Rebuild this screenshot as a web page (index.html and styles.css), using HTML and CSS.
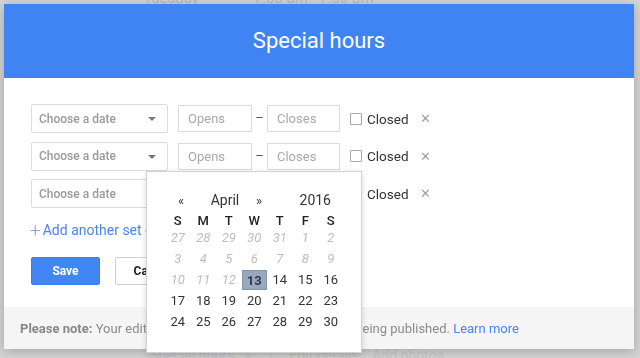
FILE: index.html
```html
<!DOCTYPE html>
<html lang="en">
<head>
  <meta charset="UTF-8" />
  <meta name="viewport" content="width=device-width, initial-scale=1.0" />
  <title>Special hours</title>
  <link rel="stylesheet" href="styles.css">
</head>
<body>

  <!-- page behind the dialog, mostly hidden -->
  <div class="page">
    <div class="page-row"><span class="day">Tuesday</span><span>7:00 am - 7:00 pm</span></div>
    <div class="page-bottom">Special hours &nbsp; v &nbsp;&nbsp;&nbsp; | &nbsp;&nbsp;&nbsp; Edit details &nbsp;&nbsp; Add photos</div>
  </div>

  <div class="overlay">
    <div class="dialog">
      <div class="dialog-head">Special hours</div>

      <div class="dialog-body">
        <div class="hours-row">
          <div class="date-select">Choose a date <span class="caret"></span></div>
          <input class="time" type="text" placeholder="Opens" />
          <span class="dash">–</span>
          <input class="time" type="text" placeholder="Closes" />
          <label class="closed"><span class="box"></span>Closed</label>
          <span class="remove">✕</span>
        </div>
        <div class="hours-row">
          <div class="date-select">Choose a date <span class="caret"></span></div>
          <input class="time" type="text" placeholder="Opens" />
          <span class="dash">–</span>
          <input class="time" type="text" placeholder="Closes" />
          <label class="closed"><span class="box"></span>Closed</label>
          <span class="remove">✕</span>
        </div>
        <div class="hours-row">
          <div class="date-select">Choose a date <span class="caret"></span></div>
          <input class="time" type="text" placeholder="Opens" />
          <span class="dash">–</span>
          <input class="time" type="text" placeholder="Closes" />
          <label class="closed"><span class="box"></span>Closed</label>
          <span class="remove">✕</span>
        </div>

        <a class="add-link" href="#"><span class="plus">+</span>Add another set of hours</a>

        <div class="actions">
          <button class="btn-save">Save</button>
          <button class="btn-cancel">Cancel</button>
        </div>
      </div>

      <div class="dialog-foot">
        <b>Please note:</b> Your edits may be checked for quality before being published. <a href="#">Learn more</a>
      </div>

      <!-- date picker opened from the second row -->
      <div class="calendar">
        <div class="cal-head">
          <span class="nav prev">«</span>
          <span class="month">April</span>
          <span class="nav next">»</span>
          <span class="year">2016</span>
        </div>
        <div class="cal-grid">
          <span class="wd">S</span><span class="wd">M</span><span class="wd">T</span><span class="wd">W</span><span class="wd">T</span><span class="wd">F</span><span class="wd">S</span>
          <span class="off">27</span><span class="off">28</span><span class="off">29</span><span class="off">30</span><span class="off">31</span><span class="off">1</span><span class="off">2</span>
          <span class="off">3</span><span class="off">4</span><span class="off">5</span><span class="off">6</span><span class="off">7</span><span class="off">8</span><span class="off">9</span>
          <span class="off">10</span><span class="off">11</span><span class="off">12</span><span class="today">13</span><span>14</span><span>15</span><span>16</span>
          <span>17</span><span>18</span><span>19</span><span>20</span><span>21</span><span>22</span><span>23</span>
          <span>24</span><span>25</span><span>26</span><span>27</span><span>28</span><span>29</span><span>30</span>
        </div>
      </div>
    </div>
  </div>

</body>
</html>
```

FILE: styles.css
```css
* {
  box-sizing: border-box;
}

body {
  margin: 0;
  font-family: Roboto, 'Noto Sans', sans-serif;
  background: #d6d6d6;
  height: 358px;
  overflow: hidden;
  color: #333;
}

.page {
  color: #bdbdbd;
  font-size: 15px;
}

.page-row {
  display: flex;
  gap: 55px;
  margin-top: -11px;
  padding-left: 143px;
}

.page-bottom {
  margin-top: 340px;
  padding-left: 150px;
  font-size: 14px;
  color: #c9c9c9;
}

.overlay {
  position: fixed;
  inset: 0;
}

.dialog {
  position: relative;
  width: 630px;
  margin: 4px 0 0 4px;
  background: #fff;
  box-shadow: 0 2px 12px rgba(0, 0, 0, 0.25);
}

.dialog-head {
  height: 74px;
  background: #4084f4;
  color: #fff;
  font-size: 22px;
  display: flex;
  align-items: center;
  justify-content: center;
  padding-bottom: 2px;
}

.dialog-body {
  padding: 26px 27px 22px;
}

.hours-row {
  display: flex;
  align-items: center;
  height: 29px;
  margin-bottom: 8.5px;
}

.date-select {
  width: 137px;
  height: 29px;
  border: 1px solid #dcdcdc;
  border-radius: 2px;
  padding-left: 7px;
  display: flex;
  align-items: center;
  font-size: 12px;
  font-weight: 500;
  color: #9a9a9a;
  position: relative;
}

.caret {
  position: absolute;
  right: 11px;
  top: 12px;
  border-left: 4px solid transparent;
  border-right: 4px solid transparent;
  border-top: 4px solid #777;
}

.time {
  height: 27px;
  border: 1px solid #dcdcdc;
  border-radius: 0;
  padding: 0 9px;
  font-family: inherit;
  font-size: 13px;
  outline: none;
}

.time::placeholder {
  color: #a8a8a8;
}

.hours-row .time:first-of-type {
  width: 74px;
  margin-left: 10px;
}

.hours-row .time:last-of-type {
  width: 73px;
}

.dash {
  width: 15px;
  text-align: center;
  font-size: 13px;
  color: #555;
  margin-top: -2px;
}

.closed {
  display: flex;
  align-items: center;
  margin-left: 10px;
  font-size: 13.5px;
  color: #333;
}

.box {
  width: 12px;
  height: 12px;
  border: 1px solid #a8a8a8;
  border-radius: 1px;
  margin-right: 5px;
}

.remove {
  margin-left: 11px;
  font-size: 13px;
  color: #a0a0a0;
}

.add-link {
  display: flex;
  align-items: center;
  margin-top: 14px;
  height: 16px;
  font-size: 14px;
  color: #4a84ee;
  text-decoration: none;
}

.plus {
  font-size: 19px;
  font-weight: 300;
  color: #8fa6d0;
  margin-right: 2px;
  margin-left: -1px;
}

.actions {
  display: flex;
  gap: 15px;
  margin-top: 19px;
}

.actions button {
  height: 28px;
  border-radius: 2px;
  font-family: inherit;
  font-size: 12px;
  font-weight: bold;
  cursor: pointer;
}

.btn-save {
  width: 69px;
  background: #4285f4;
  color: #fff;
  border: 1px solid #3b7deb;
}

.btn-cancel {
  width: 74px;
  background: #fff;
  color: #222;
  border: 1px solid #cfcfcf;
}

.dialog-foot {
  height: 42px;
  background: #f5f5f5;
  padding: 0 16px;
  display: flex;
  align-items: center;
  white-space: pre;
  font-size: 13px;
  color: #8a8a8a;
}

.dialog-foot b {
  color: #888;
}

.dialog-foot a {
  color: #4a84ee;
  text-decoration: none;
}

.calendar {
  position: absolute;
  top: 167px;
  left: 142px;
  width: 216px;
  height: 182px;
  background: #fff;
  border: 1px solid #d2d2d2;
  box-shadow: 0 2px 6px rgba(0, 0, 0, 0.15);
  padding: 18px 18px 0 18px;
}

.cal-head {
  display: flex;
  align-items: center;
  height: 20px;
  font-size: 14px;
  color: #333;
}

.nav {
  font-size: 13px;
}

.prev {
  width: 32px;
  text-align: center;
}

.month {
  width: 56px;
  text-align: center;
}

.next {
  width: 12px;
  text-align: center;
}

.year {
  flex: 1;
  text-align: right;
  padding-right: 12px;
}

.cal-grid {
  display: grid;
  grid-template-columns: repeat(7, 25.5px);
  grid-template-rows: 13px repeat(5, 21px);
  margin-top: 4px;
  font-size: 13px;
  color: #333;
}

.cal-grid span {
  display: flex;
  align-items: center;
  justify-content: center;
}

.cal-grid .wd {
  font-weight: 500;
  color: #222;
}

.cal-grid .off {
  color: #bdbdbd;
  font-style: italic;
}

.cal-grid .today {
  background: #98a9bd;
  border: 1px solid #8596ab;
  font-weight: bold;
  color: #2f3b48;
  margin: 1px 0 0;
}
```
